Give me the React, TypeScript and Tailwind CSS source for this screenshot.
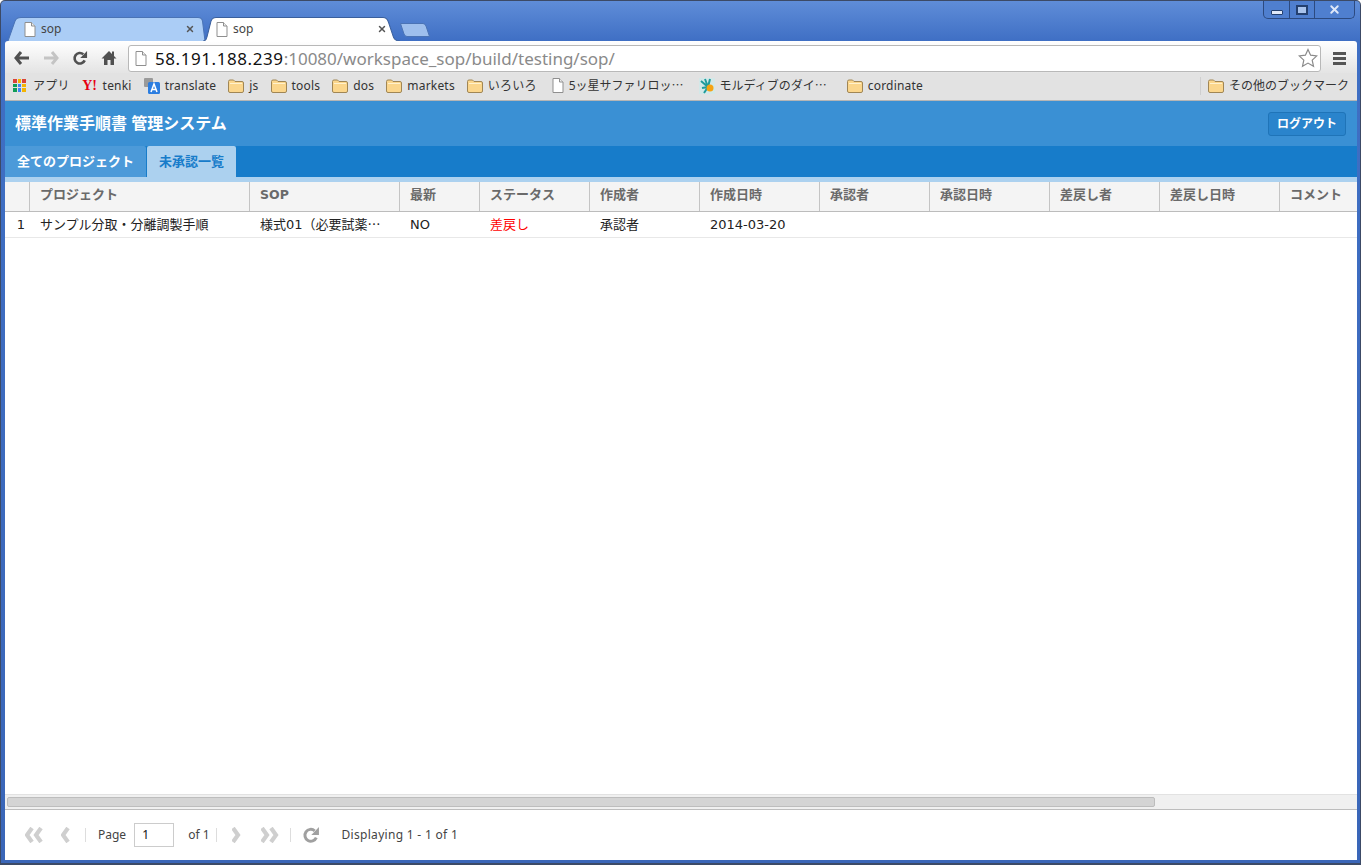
import React from 'react';
import { X } from 'lucide-react';

const columns = [
  { label: '', width: 'w-[25px]', text: 'text-[13px]' },
  { label: 'プロジェクト', width: 'w-[220px]', text: 'text-[13px]' },
  { label: 'SOP', width: 'w-[150px]', text: 'text-[12.5px]' },
  { label: '最新', width: 'w-[80px]', text: 'text-[13px]' },
  { label: 'ステータス', width: 'w-[110px]', text: 'text-[13px]' },
  { label: '作成者', width: 'w-[110px]', text: 'text-[13px]' },
  { label: '作成日時', width: 'w-[120px]', text: 'text-[13px]' },
  { label: '承認者', width: 'w-[110px]', text: 'text-[13px]' },
  { label: '承認日時', width: 'w-[120px]', text: 'text-[13px]' },
  { label: '差戻し者', width: 'w-[110px]', text: 'text-[13px]' },
  { label: '差戻し日時', width: 'w-[120px]', text: 'text-[13px]' },
  { label: 'コメント', width: 'flex-1', text: 'text-[13px]' },
];

function PageIcon({ className }: { className?: string }) {
  return (
    <svg viewBox="0 0 12 15" className={className}>
      <path d="M1 .5h6.500L11 4v10.500H1z" fill="#fff" stroke="#8f8f8f" />
      <path d="M7.500.5V4H11" fill="#eee" stroke="#8f8f8f" />
    </svg>
  );
}

function FolderIcon() {
  return (
    <svg viewBox="0 0 16 14" className="w-[16px] h-[14px] shrink-0">
      <path d="M.5 12V2.500q0-1.500 1.500-1.500h3.500L7 2.500h7q1.500 0 1.500 1.500v8q0 1.500-1.500 1.500H2Q.5 13.500.5 12z" fill="#fbd68c" stroke="#a08655" />
      <path d="M2 4.500h12" stroke="#fff1cc" />
    </svg>
  );
}

function ReloadIcon({ className, color }: { className?: string; color: string }) {
  return (
    <svg viewBox="0 0 17 17" className={className}>
      <path d="M13.500 11A5.600 5.600 0 1 1 12 4.500" fill="none" stroke={color} strokeWidth="2.800" />
      <path d="M16 1V8.500H8.800z" fill={color} />
    </svg>
  );
}

function Chevrons({ dir, count }: { dir: 'left' | 'right'; count: 1 | 2 }) {
  const points = (x: number) =>
    dir === 'left' ? `${x + 7},1 ${x + 2},8 ${x + 7},15` : `${x + 1},1 ${x + 6},8 ${x + 1},15`;
  return (
    <svg viewBox={count === 2 ? '0 0 18 16' : '0 0 9 16'} className={count === 2 ? 'w-[18px] h-[16px]' : 'w-[9px] h-[16px]'}>
      <polyline points={points(0)} fill="none" stroke="#cfcfcf" strokeWidth="4.200" />
      {count === 2 && <polyline points={points(9)} fill="none" stroke="#cfcfcf" strokeWidth="4.200" />}
    </svg>
  );
}

function Tab({ active }: { active?: boolean }) {
  return (
    <div className={`relative h-[24px] w-[197px] flex items-center gap-[5px] ${active ? 'z-10 pl-[13px] pr-[13px]' : '-mr-[2px] pl-[16px] pr-[10px]'}`}>
      <svg viewBox="0 0 197 23" preserveAspectRatio="none" className="absolute inset-0 w-full h-full">
        {active ? (
          <path
            d="M0 23C2.500 23 3.500 21 4 19L8 4C9 1.500 10.500 .5 13 .5H180C183 .5 184.500 2 185.500 5L190 18C191 21.500 193 23 197 23"
            fill="#ffffff"
            stroke="#3a5f9c"
          />
        ) : (
          <path
            d="M0 23L7 4C8 1.500 10 .5 13 .5H190C192.500 .5 194 1.500 194.500 4L197 23"
            fill="#abcdf6"
            stroke="#4a73b5"
          />
        )}
      </svg>
      <PageIcon className="relative w-[12px] h-[15px]" />
      <span className="relative flex-1 text-[12px] text-[#444] leading-none">sop</span>
      <X className="relative w-[10px] h-[10px] text-[#555]" strokeWidth={3.500} />
    </div>
  );
}

function BookmarkLabel({ icon, text, className }: { icon: React.ReactNode; text: React.ReactNode; className?: string }) {
  return (
    <div className={`flex items-center gap-[5px] ${className ?? ''}`}>
      {icon}
      <span className="text-[12px] tracking-[0.2px] text-[#333] whitespace-nowrap">{text}</span>
    </div>
  );
}

// full-width centred ellipsis, as the CJK fonts draw it
function Dots() {
  return <span className="[font-family:'Noto_Sans_CJK_JP',sans-serif] tracking-normal">…</span>;
}

export default function App() {
  return (
    <div className="[font-family:'Noto_Sans','Noto_Sans_CJK_JP',sans-serif] w-[1361px] h-[865px] overflow-hidden flex flex-col border border-[#3c4a66] border-b-2 rounded-t-[5px] bg-[linear-gradient(#5f8dd8_0,#3f6fc4_40px,#3a66b8_100%)] pl-[4px] pr-[3px] pb-[3px]">
      {/* window strip */}
      <div className="relative h-[40px] shrink-0 flex items-end pl-[3px]">
        <Tab />
        <Tab active />
        <svg viewBox="0 0 30 14" className="w-[30px] h-[14px] mb-[4px]">
          <path d="M.5.5H23Q25 .5 26 3L29.500 13.500H7Q5 13.500 4 11Z" fill="#9ebfed" stroke="#4a73b5" />
        </svg>
        <div className="absolute right-[2px] top-0 h-[18px] w-[92px] flex border border-t-0 border-[#2c4a80] rounded-b-[5px] bg-[#4f7fcf]">
          <div className="w-[26px] flex items-center justify-center border-r border-[#2c4a80]">
            <div className="w-[12px] h-[5px] mt-[5px] rounded-[1px] bg-[#dfe8f8] border border-[#24406f]" />
          </div>
          <div className="w-[25px] flex items-center justify-center border-r border-[#2c4a80]">
            <div className="w-[12px] h-[10px] border-[2px] border-[#24406f] bg-[#a8c3ec]" />
          </div>
          <div className="flex-1 flex items-center justify-center">
            <X className="w-[13px] h-[13px] text-[#dfe8f8]" strokeWidth={3.500} />
          </div>
        </div>
      </div>

      {/* browser toolbar */}
      <div className="h-[32px] shrink-0 flex items-center bg-gradient-to-b from-[#ffffff] to-[#e4e4e4] rounded-t-[3px] pt-[2px] pl-[9px]">
        <svg viewBox="0 0 16 14" className="w-[16px] h-[14px]">
          <path d="M7 1L2 7l5 6M2.500 7H15" fill="none" stroke="#505050" strokeWidth="3" />
        </svg>
        <svg viewBox="0 0 16 14" className="w-[16px] h-[14px] ml-[13px]">
          <path d="M9 1l5 6-5 6M13.500 7H1" fill="none" stroke="#c4c4c4" strokeWidth="3" />
        </svg>
        <ReloadIcon className="w-[16px] h-[16px] ml-[13px]" color="#505050" />
        <svg viewBox="0 0 16 16" className="w-[16px] h-[16px] ml-[13px]">
          <path d="M8 1L.5 8.500H3V15h3.500v-5h3v5H13V8.500h2.500L13 6V1.500h-2V4z" fill="#505050" />
        </svg>
        <div className="ml-[11px] h-[27px] w-[1193px] flex items-center bg-white border border-[#b8b8b8] rounded-[3px] pl-[6px] pr-[2px]">
          <PageIcon className="w-[12px] h-[15px]" />
          <div className="ml-[8px] flex-1 text-[17px] leading-none whitespace-nowrap">
            <span className="text-[#111] tracking-[0.57px]">58.191.188.239</span>
            <span className="text-[#8a8a8a]">:10080/workspace_sop/build/testing/sop/</span>
          </div>
          <svg viewBox="0 0 20 20" className="w-[20px] h-[20px]">
            <path d="M10 1.500l2.600 5.700 6.200.7-4.600 4.200 1.300 6.100L10 15.100l-5.500 3.100 1.300-6.100L1.200 7.900l6.200-.7z" fill="#fff" stroke="#8a8a8a" strokeWidth="1.200" />
          </svg>
        </div>
        <div className="ml-[12px] w-[13px] flex flex-col gap-[2px]">
          <div className="h-[3px] bg-[#555]" />
          <div className="h-[3px] bg-[#555]" />
          <div className="h-[3px] bg-[#555]" />
        </div>
      </div>

      {/* bookmarks bar */}
      <div className="h-[28px] shrink-0 flex items-center bg-[#e2e2e2] border-b border-[#b5b5b5] pl-[8px] pb-[2px]">
        <BookmarkLabel
          className="gap-[7px]"
          icon={
            <div className="grid grid-cols-3 gap-[1px] w-[13px] h-[13px]">
              <span className="bg-[#db4437]" /><span className="bg-[#f4b400]" /><span className="bg-[#db4437]" />
              <span className="bg-[#0f9d58]" /><span className="bg-[#4285f4]" /><span className="bg-[#f4b400]" />
              <span className="bg-[#0f9d58]" /><span className="bg-[#4285f4]" /><span className="bg-[#f4b400]" />
            </div>
          }
          text="アプリ"
        />
        <BookmarkLabel
          className="ml-[12px]"
          icon={
            <span className="w-[16px] [font-family:'Liberation_Serif',serif] text-[14px] leading-none font-bold text-[#e60012] text-center">Y!</span>
          }
          text="tenki"
        />
        <BookmarkLabel
          className="ml-[12px]"
          icon={
            <svg viewBox="0 0 16 16" className="w-[16px] h-[16px]">
              <rect x="0" y="0" width="9" height="9" rx="1" fill="#9a9a9a" />
              <rect x="4" y="4" width="12" height="12" rx="1.500" fill="#2b7de0" />
              <path d="M7 14l3-8 3 8M8 11.500h4" fill="none" stroke="#fff" strokeWidth="1.500" />
            </svg>
          }
          text="translate"
        />
        <BookmarkLabel className="ml-[12px]" icon={<FolderIcon />} text="js" />
        <BookmarkLabel className="ml-[12px]" icon={<FolderIcon />} text="tools" />
        <BookmarkLabel className="ml-[12px]" icon={<FolderIcon />} text="dos" />
        <BookmarkLabel className="ml-[12px]" icon={<FolderIcon />} text="markets" />
        <BookmarkLabel className="ml-[12px]" icon={<FolderIcon />} text="いろいろ" />
        <BookmarkLabel
          className="ml-[15px]"
          icon={<PageIcon className="w-[12px] h-[15px]" />}
          text={<span className="tracking-normal">5ッ星サファリロッ<Dots /></span>}
        />
        <BookmarkLabel
          className="ml-[15px]"
          icon={
            <svg viewBox="0 0 16 16" className="w-[16px] h-[16px]">
              <rect width="16" height="16" fill="#d3e8e8" />
              <path d="M9 9L2 3M9 9L6 1M9 9L11 1M9 9L3 10M9 9L5 15" stroke="#1f9c9c" strokeWidth="2" />
              <circle cx="11" cy="10" r="3.500" fill="#f6a313" />
            </svg>
          }
          text={<span className="tracking-normal">モルディブのダイ<Dots /></span>}
        />
        <BookmarkLabel className="ml-[20px]" icon={<FolderIcon />} text="cordinate" />
        <div className="ml-auto mr-[8px] flex items-center border-l border-[#cfcfcf] pl-[7px]">
          <BookmarkLabel icon={<FolderIcon />} text={<span className="tracking-normal">その他のブックマーク</span>} />
        </div>
      </div>

      {/* app */}
      <div className="flex-1 min-h-0 flex flex-col bg-white">
        <div className="h-[45px] shrink-0 flex items-center justify-between bg-[#3a90d4] pl-[10px] pr-[11px]">
          <span className="mb-[2px] text-[16px] font-bold text-white">標準作業手順書 管理システム</span>
          <button className="h-[24px] w-[78px] rounded-[3px] border border-[#1f74b8] bg-[#2a84cc] text-[12px] font-bold text-white">ログアウト</button>
        </div>
        <div className="h-[31px] shrink-0 flex items-end bg-[#177cca]">
          <div className="h-[31px] w-[141px] flex items-center justify-center bg-[#4c9ad9] text-[13px] font-bold text-white rounded-tr-[2px]">全てのプロジェクト</div>
          <div className="h-[31px] w-[89px] flex items-center justify-center bg-[#acd1ef] text-[13px] font-bold text-[#177cca] rounded-t-[2px] ml-px">未承認一覧</div>
        </div>
        <div className="h-[5px] shrink-0 bg-[#acd1ef]" />

        <div className="h-[30px] shrink-0 flex bg-[#f4f4f4] border-b border-[#bcbcbc]">
          {columns.map((col, i) => (
            <div
              key={i}
              className={`${col.width} ${col.text} shrink-0 flex items-center pl-[10px] pb-[3px] [font-family:'DejaVu_Sans','Noto_Sans_CJK_JP',sans-serif] font-bold text-[#6a6a6a] ${i < columns.length - 1 ? 'border-r border-[#c4c4c4]' : ''}`}
            >
              {col.label}
            </div>
          ))}
        </div>

        <div className="h-[26px] shrink-0 flex items-center border-b border-[#e8e8e8] [font-family:'DejaVu_Sans','Noto_Sans_CJK_JP',sans-serif] text-[13px] text-[#222]">
          <div className="w-[25px] text-center pl-[7px]">1</div>
          <div className="w-[220px] pl-[10px]">サンプル分取・分離調製手順</div>
          <div className="w-[150px] pl-[10px] whitespace-nowrap">様式01（必要試薬<Dots /></div>
          <div className="w-[80px] pl-[10px]">NO</div>
          <div className="w-[110px] pl-[10px] text-[#ff0000]">差戻し</div>
          <div className="w-[110px] pl-[10px]">承認者</div>
          <div className="w-[120px] pl-[10px]">2014-03-20</div>
        </div>

        <div className="flex-1 min-h-0" />

        {/* horizontal scrollbar */}
        <div className="h-[16px] shrink-0 flex items-center bg-[#f0f0f0] border-t border-[#e2e2e2] border-b border-b-[#bdbdbd] pl-[2px]">
          <div className="h-[10px] w-[1148px] bg-[#d4d4d4] border border-[#bdbdbd] rounded-[2px]" />
        </div>

        {/* pager */}
        <div className="h-[50px] shrink-0 flex items-center pl-[20px] text-[12px] text-[#444]">
          <Chevrons dir="left" count={2} />
          <div className="ml-[18px]"><Chevrons dir="left" count={1} /></div>
          <div className="w-px h-[14px] bg-[#ddd] ml-[15px]" />
          <span className="ml-[12px]">Page</span>
          <div className="ml-[8px] h-[24px] w-[40px] flex items-center pl-[7px] border border-[#ccc] text-[#111]">1</div>
          <span className="ml-[14px]">of 1</span>
          <div className="w-px h-[14px] bg-[#ddd] ml-[6px]" />
          <div className="ml-[15px]"><Chevrons dir="right" count={1} /></div>
          <div className="ml-[20px]"><Chevrons dir="right" count={2} /></div>
          <div className="w-px h-[14px] bg-[#ddd] ml-[11px]" />
          <ReloadIcon className="w-[18px] h-[18px] ml-[11px]" color="#a0a0a0" />
          <span className="ml-[22px] tracking-[0.3px]">Displaying 1 - 1 of 1</span>
        </div>
      </div>
    </div>
  );
}
